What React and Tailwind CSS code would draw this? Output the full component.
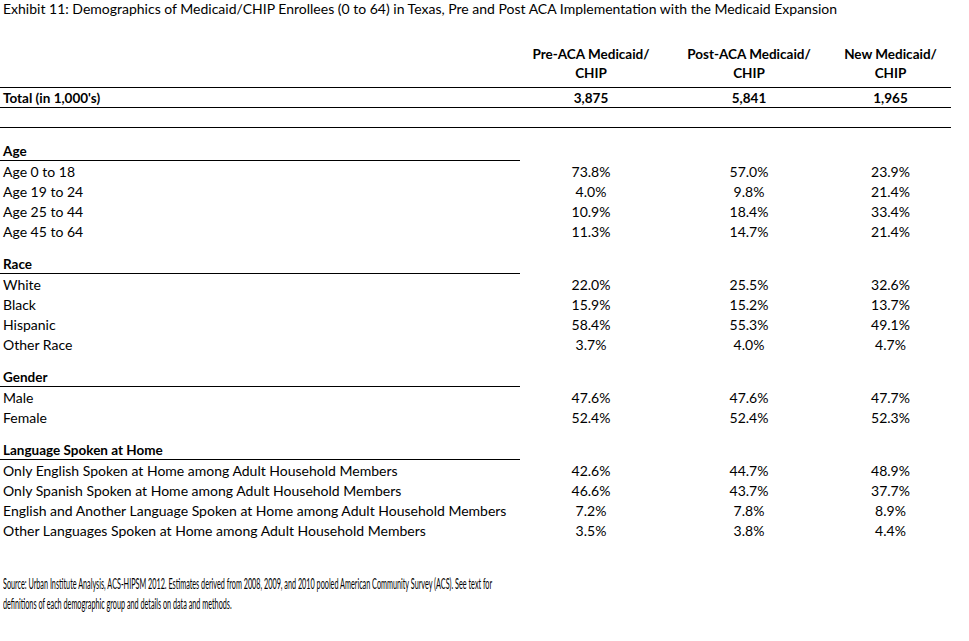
const SECTIONS = [
  {
    title: 'Age',
    rows: [
      ['Age 0 to 18', '73.8%', '57.0%', '23.9%'],
      ['Age 19 to 24', '4.0%', '9.8%', '21.4%'],
      ['Age 25 to 44', '10.9%', '18.4%', '33.4%'],
      ['Age 45 to 64', '11.3%', '14.7%', '21.4%'],
    ],
  },
  {
    title: 'Race',
    rows: [
      ['White', '22.0%', '25.5%', '32.6%'],
      ['Black', '15.9%', '15.2%', '13.7%'],
      ['Hispanic', '58.4%', '55.3%', '49.1%'],
      ['Other Race', '3.7%', '4.0%', '4.7%'],
    ],
  },
  {
    title: 'Gender',
    rows: [
      ['Male', '47.6%', '47.6%', '47.7%'],
      ['Female', '52.4%', '52.4%', '52.3%'],
    ],
  },
  {
    title: 'Language Spoken at Home',
    rows: [
      ['Only English Spoken at Home among Adult Household Members', '42.6%', '44.7%', '48.9%'],
      ['Only Spanish Spoken at Home among Adult Household Members', '46.6%', '43.7%', '37.7%'],
      ['English and Another Language Spoken at Home among Adult Household Members', '7.2%', '7.8%', '8.9%'],
      ['Other Languages Spoken at Home among Adult Household Members', '3.5%', '3.8%', '4.4%'],
    ],
  },
];

const COLS = ['w-[142px]', 'w-[174px]', 'w-[115px] pr-[6px]'];

const Row = ({ label, values, className = 'pt-[1px]' }) => (
  <div className={`flex h-[20px] items-center ${className}`}>
    <div className="w-[520px] pl-[3px] whitespace-nowrap">{label}</div>
    {values.map((v, i) => (
      <div key={i} className={`${COLS[i]} text-center`}>
        {v}
      </div>
    ))}
  </div>
);

export default function App() {
  return (
    <div className="w-[969px] h-[641px] bg-white text-black font-['Lato','Liberation_Sans',sans-serif] text-[14px] overflow-hidden">
      <div className="h-[20px] flex items-center pb-[3px] pl-[3px] whitespace-nowrap">
        Exhibit 11: Demographics of Medicaid/CHIP Enrollees (0 to 64) in Texas, Pre and Post ACA Implementation with the Medicaid Expansion
      </div>

      <div className="w-[951px]">
        <div className="flex pt-[25px] pb-[4px] font-bold text-[13.5px] leading-[19px]">
          <div className="w-[520px]" />
          <div className={`${COLS[0]} text-center`}>Pre-ACA Medicaid/<br />CHIP</div>
          <div className={`${COLS[1]} text-center`}>Post-ACA Medicaid/<br />CHIP</div>
          <div className={`${COLS[2]} text-center`}>New Medicaid/<br />CHIP</div>
        </div>

        <Row
          label="Total (in 1,000's)"
          values={['3,875', '5,841', '1,965']}
          className="h-[21px] pt-[2px] border-y border-black font-bold text-[13.5px]"
        />
        <div className="h-[20px] border-b border-black" />

        {SECTIONS.map((s) => (
          <div key={s.title} className="pt-[13px]">
            <div className="w-[520px] h-[20px] flex items-center pt-[2px] pl-[3px] border-b border-black font-bold text-[13.5px]">
              {s.title}
            </div>
            {s.rows.map((r) => (
              <Row key={r[0]} label={r[0]} values={r.slice(1)} />
            ))}
          </div>
        ))}
      </div>

      <div className="pt-[34px] pl-[3px] text-[14.5px] leading-[20px] whitespace-nowrap">
        <div className="origin-left scale-x-[0.5]">
          Source: Urban Institute Analysis, ACS-HIPSM 2012. Estimates derived from 2008, 2009, and 2010 pooled American Community Survey (ACS). See text for
        </div>
        <div className="origin-left scale-x-[0.5]">
          definitions of each demographic group and details on data and methods.
        </div>
      </div>
    </div>
  );
}
